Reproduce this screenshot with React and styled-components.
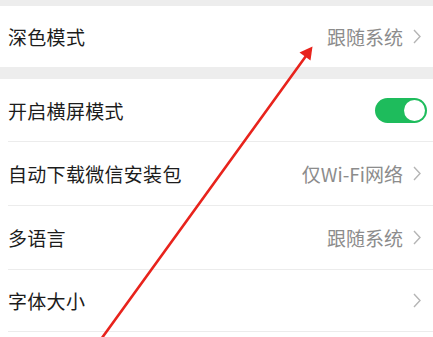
import React from "react";
import styled, { createGlobalStyle } from "styled-components";

const Global = createGlobalStyle`
  html, body { margin: 0; padding: 0; background: #ededed; }
  body { font-family: "Noto Sans CJK SC", "Noto Sans", sans-serif; }
`;

const Page = styled.div`
  position: relative;
  width: 433px;
  height: 337px;
  overflow: hidden;
  background: #ededed;
  padding-top: 6px;
  box-sizing: border-box;
`;

const Group = styled.div`
  background: #fff;
  padding-left: 8px;
  margin-bottom: ${(p) => p.$gap || 0}px;
`;

const Row = styled.div`
  display: flex;
  align-items: center;
  justify-content: space-between;
  height: ${(p) => p.$h || 64}px;
  box-sizing: border-box;
  padding-right: ${(p) => (p.$toggle ? 6 : 12)}px;
  border-bottom: ${(p) => (p.$line ? "1px solid #ececec" : "none")};
`;

const Label = styled.span`
  font-size: 19px;
  color: #1c1c1c;
  letter-spacing: 0.3px;
`;

const Value = styled.span`
  display: flex;
  align-items: center;
  gap: 10px;
  font-size: 19px;
  color: #8c8c8c;
`;

const Chevron = () => (
  <svg width="8" height="15" viewBox="0 0 8 15">
    <path d="M1 1 L7 7.5 L1 14" fill="none" stroke="#b5b5b5" strokeWidth="1.4" />
  </svg>
);

const Toggle = styled.div`
  width: 52px;
  height: 25px;
  border-radius: 13px;
  background: #1ebc5c;
  position: relative;
  &::after {
    content: "";
    position: absolute;
    right: 2px;
    top: 2px;
    width: 21px;
    height: 21px;
    border-radius: 50%;
    background: #fff;
  }
`;

const Overlay = styled.svg`
  position: absolute;
  left: 0;
  top: 0;
  pointer-events: none;
`;

export default function App() {
  return (
    <>
      <Global />
      <Page>
        <Group $gap={12}>
          <Row $h={61}>
            <Label>深色模式</Label>
            <Value>
              跟随系统
              <Chevron />
            </Value>
          </Row>
        </Group>
        <Group>
          <Row $h={63} $line $toggle>
            <Label>开启横屏模式</Label>
            <Toggle />
          </Row>
          <Row $line>
            <Label>自动下载微信安装包</Label>
            <Value>
              仅Wi-Fi网络
              <Chevron />
            </Value>
          </Row>
          <Row $line>
            <Label>多语言</Label>
            <Value>
              跟随系统
              <Chevron />
            </Value>
          </Row>
          <Row $line $h={62}>
            <Label>字体大小</Label>
            <Value>
              <Chevron />
            </Value>
          </Row>
          <Row $h={40} />
        </Group>
        <Overlay width="433" height="337" viewBox="0 0 433 337">
          <line x1="99" y1="342" x2="306" y2="56" stroke="#e8231c" strokeWidth="2.6" strokeLinecap="round" />
          <polygon points="312.5,46.5 310.5,60.5 299.5,52.5" fill="#e8231c" />
        </Overlay>
      </Page>
    </>
  );
}
